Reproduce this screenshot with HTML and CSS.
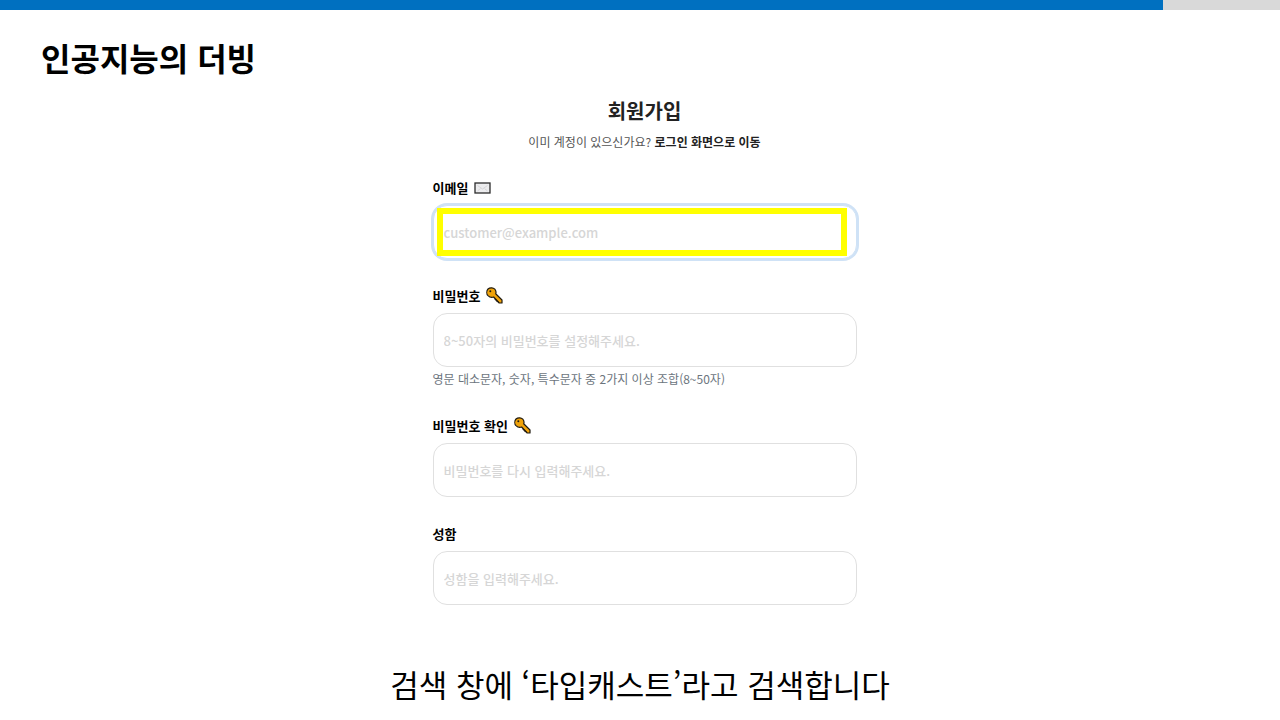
FILE: index.html
```html
<!DOCTYPE html>
<html lang="ko">
<head>
    <meta charset="UTF-8">
    <meta name="viewport" content="width=device-width, initial-scale=1.0">
    <title>인공지능의 더빙</title>
    <link rel="stylesheet" href="styles.css">
</head>
<body>
    <div class="progress">
        <div class="progress-bar"></div>
    </div>

    <h1 class="slide-title">인공지능의 더빙</h1>

    <main class="content">
        <form class="signup">
            <h2 class="signup-title">회원가입</h2>
            <p class="signup-login">이미 계정이 있으신가요? <a href="#">로그인 화면으로 이동</a></p>

            <div class="field">
                <label for="email">이메일
                    <svg class="icon" viewBox="0 0 17 17" aria-hidden="true">
                        <rect x="1" y="4" width="15" height="10" fill="#ececee" stroke="#2b2b2b" stroke-width="1.3"/>
                        <path d="M3.500 6.500l5 3.500 5-3.500M3.500 12l3-2.500M13.500 12l-3-2.500" fill="none" stroke="#cfcfd2" stroke-width=".8"/>
                    </svg>
                </label>
                <div class="input-wrap">
                    <input class="focused" type="email" id="email" placeholder="customer@example.com">
                    <div class="highlight"></div>
                </div>
            </div>

            <div class="field">
                <label for="password">비밀번호
                    <svg class="icon" viewBox="0 0 17 17" aria-hidden="true">
                        <path d="M2 2C4 .3 7.200 .5 8.800 2.200c1.200 1.400 1.500 3 .9 4.600l6.300 6.200v3h-2.800L7.600 10C5.600 10.600 3.600 10.200 2 8.600.400 6.900.400 3.900 2 2z" fill="#f0a30a" stroke="#1f1a10" stroke-width="1.200" stroke-linejoin="round"/>
                        <circle cx="4.300" cy="4.300" r="1" fill="#1f1a10"/>
                        <path d="M9.200 11.700v1.300h1.600v1.600h1.700" fill="none" stroke="#1f1a10"/>
                    </svg>
                </label>
                <input type="password" id="password" placeholder="8~50자의 비밀번호를 설정해주세요.">
                <p class="help">영문 대소문자, 숫자, 특수문자 중 2가지 이상 조합(8~50자)</p>
            </div>

            <div class="field">
                <label for="password-check">비밀번호 확인
                    <svg class="icon" viewBox="0 0 17 17" aria-hidden="true">
                        <path d="M2 2C4 .3 7.200 .5 8.800 2.200c1.200 1.400 1.500 3 .9 4.600l6.300 6.200v3h-2.800L7.600 10C5.600 10.600 3.600 10.200 2 8.600.400 6.900.400 3.900 2 2z" fill="#f0a30a" stroke="#1f1a10" stroke-width="1.200" stroke-linejoin="round"/>
                        <circle cx="4.300" cy="4.300" r="1" fill="#1f1a10"/>
                        <path d="M9.200 11.700v1.300h1.600v1.600h1.700" fill="none" stroke="#1f1a10"/>
                    </svg>
                </label>
                <input type="password" id="password-check" placeholder="비밀번호를 다시 입력해주세요.">
            </div>

            <div class="field">
                <label for="name">성함</label>
                <input type="text" id="name" placeholder="성함을 입력해주세요.">
            </div>
        </form>
    </main>

    <p class="caption">검색 창에 ‘타입캐스트’라고 검색합니다</p>
</body>
</html>
```

FILE: styles.css
```css
*{
    margin: 0;
    padding: 0;
    box-sizing: border-box;
}
body{
    min-height: 100vh;
    display: flex;
    flex-direction: column;
    background-color: #fff;
    color: #000;
    font-family: "Noto Sans CJK KR", sans-serif;
}

.progress{
    height: 10px;
    background-color: #d9d9d9;
}
.progress-bar{
    width: 90.85%;
    height: 100%;
    background-color: #0070c0;
}

.slide-title{
    padding: 23px 41px 0;
    font-size: 32px;
    line-height: 48px;
    font-weight: 700;
}

.content{
    flex: 1;
    padding: 15px 0 0 9px;
}
.signup{
    width: 100%;
    max-width: 424px;
    margin: 0 auto;
}
.signup-title{
    font-size: 20px;
    line-height: 30px;
    text-align: center;
    color: #222;
}
.signup-login{
    margin: 6px 0 26px;
    font-size: 12px;
    line-height: 20px;
    text-align: center;
    color: #555;
}
.signup-login a{
    color: #222;
    font-weight: 700;
    text-decoration: none;
}

.field{
    margin-bottom: 27px;
}
.field label{
    display: flex;
    align-items: center;
    gap: 6px;
    margin-bottom: 8px;
    font-size: 13px;
    line-height: 19px;
    font-weight: 700;
}
.icon{
    width: 17px;
    height: 17px;
}
.field input{
    display: block;
    width: 100%;
    height: 54px;
    padding: 0 10px;
    border: 1px solid #e0e0e0;
    border-radius: 14px;
    background-color: #fff;
    font-family: inherit;
    font-size: 13px;
    font-weight: 500;
    outline: none;
}
.field input::placeholder{
    color: #d6d6d6;
}
.field .focused{
    border-color: #cfe2f6;
    box-shadow: 0 0 0 2px #cfe2f6;
}
.help{
    margin-top: 2px;
    font-size: 12px;
    line-height: 20px;
    color: #6c757d;
}

.input-wrap{
    position: relative;
}
.highlight{
    position: absolute;
    top: 3px;
    right: 10px;
    bottom: 3px;
    left: 4px;
    border: 6px solid #ff0;
    pointer-events: none;
}

.caption{
    padding-bottom: 12px;
    font-size: 31px;
    line-height: 48px;
    text-align: center;
}
```
